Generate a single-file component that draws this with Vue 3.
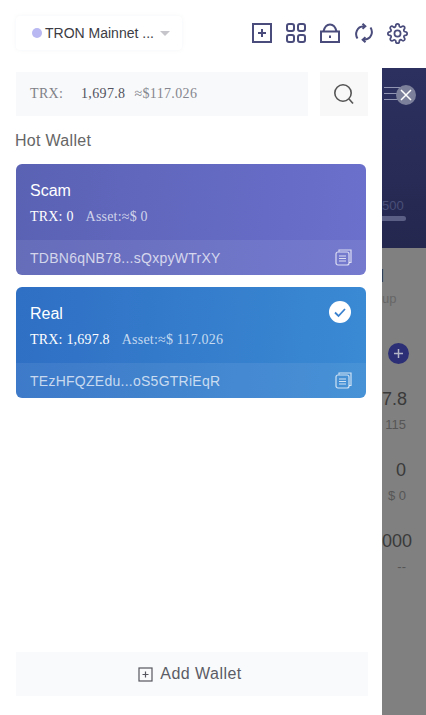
<script setup>
const wallets = [
  {
    name: "Scam",
    trx: "0",
    asset: "0",
    address: "TDBN6qNB78...sQxpyWTrXY",
    kind: "scam",
    active: false,
  },
  {
    name: "Real",
    trx: "1,697.8",
    asset: "117.026",
    address: "TEzHFQZEdu...oS5GTRiEqR",
    kind: "real",
    active: true,
  },
];

const sideRows = [
  { main: "7.8", sub: "115" },
  { main: "0", sub: "$ 0" },
  { main: "000", sub: "--" },
];
</script>

<template>
  <div class="page">
    <aside class="drawer">
      <header class="top">
        <div class="network">
          <span class="network__dot"></span>
          <span class="network__name">TRON Mainnet ...</span>
          <span class="network__caret"></span>
        </div>
        <div class="tools">
          <svg class="tool" viewBox="0 0 20 20" fill="none">
            <rect x="1" y="1" width="18" height="18" />
            <path d="M10 6v8M6 10h8" />
          </svg>
          <svg class="tool" viewBox="0 0 20 20" fill="none">
            <rect x="1" y="1" width="7" height="7" rx="2" />
            <rect x="12" y="1" width="7" height="7" rx="2" />
            <rect x="1" y="12" width="7" height="7" rx="2" />
            <rect x="12" y="12" width="7" height="7" rx="2" />
          </svg>
          <svg class="tool" viewBox="0 0 20 20" fill="none">
            <rect x="1" y="8.5" width="18" height="10.5" />
            <path d="M3.5 8.5C4.5 4 7 1.500 10 1.500s5.500 2.500 6.500 7M10 12.500v2.500" />
          </svg>
          <svg class="tool" viewBox="0 0 20 20" fill="none">
            <path d="M3.500 15.500C.500 11 2.500 3.500 10 3.300M16.500 4.500c3 4.500 1 12-6.500 12.200" />
            <path d="M8.500 .8l2.800 2.500-2.800 2.500M11.500 14.200l-2.800 2.500 2.800 2.500" />
          </svg>
          <svg class="tool tool--gear" viewBox="0 0 24 24" fill="none">
            <circle cx="12" cy="12" r="3.500" />
            <path d="M19.400 15a1.650 1.650 0 0 0 .33 1.820l.06.06a2 2 0 0 1 0 2.830 2 2 0 0 1-2.830 0l-.06-.06a1.650 1.650 0 0 0-1.820-.33 1.650 1.650 0 0 0-1 1.510V21a2 2 0 0 1-2 2 2 2 0 0 1-2-2v-.09A1.650 1.650 0 0 0 9 19.400a1.650 1.650 0 0 0-1.820.33l-.06.06a2 2 0 0 1-2.830 0 2 2 0 0 1 0-2.830l.06-.06a1.650 1.650 0 0 0 .33-1.820 1.650 1.650 0 0 0-1.510-1H3a2 2 0 0 1-2-2 2 2 0 0 1 2-2h.09A1.650 1.650 0 0 0 4.600 9a1.650 1.650 0 0 0-.33-1.820l-.06-.06a2 2 0 0 1 0-2.830 2 2 0 0 1 2.830 0l.06.06a1.650 1.650 0 0 0 1.820.33H9a1.650 1.650 0 0 0 1-1.510V3a2 2 0 0 1 2-2 2 2 0 0 1 2 2v.09a1.650 1.650 0 0 0 1 1.510 1.650 1.650 0 0 0 1.820-.33l.06-.06a2 2 0 0 1 2.830 0 2 2 0 0 1 0 2.830l-.06.06a1.650 1.650 0 0 0-.33 1.820V9a1.650 1.650 0 0 0 1.510 1H21a2 2 0 0 1 2 2 2 2 0 0 1-2 2h-.09a1.650 1.650 0 0 0-1.510 1z" />
          </svg>
        </div>
      </header>

      <div class="balance-row">
        <div class="balance">
          <span class="balance__label">TRX:</span>
          <span class="balance__value">1,697.8</span>
          <span class="balance__fiat">≈$117.026</span>
        </div>
        <button type="button" class="search" aria-label="Search">
          <svg viewBox="0 0 22 22" fill="none">
            <circle cx="10" cy="10" r="8.200" />
            <path d="M16 16l4 4.500" />
          </svg>
        </button>
      </div>

      <h2 class="section">Hot Wallet</h2>

      <div class="wallets">
        <article v-for="w in wallets" :key="w.name" class="wallet" :class="`wallet--${w.kind}`">
          <div class="wallet__body">
            <h3 class="wallet__name">{{ w.name }}</h3>
            <p class="wallet__meta">
              <span class="wallet__trx">TRX: {{ w.trx }}</span>
              <span class="wallet__asset">Asset:≈$ {{ w.asset }}</span>
            </p>
            <svg v-if="w.active" class="wallet__check" viewBox="0 0 22 22">
              <circle cx="11" cy="11" r="11" fill="#fff" />
              <path d="M6 11.500l3.500 3.500L16 8" fill="none" stroke="#3a82cf" stroke-width="1.800" />
            </svg>
          </div>
          <div class="wallet__foot">
            <span class="wallet__addr">{{ w.address }}</span>
            <svg class="wallet__copy" viewBox="0 0 17 17" fill="none">
              <path d="M4 2.500V1h12v12.500h-2" />
              <rect x="1" y="3" width="13" height="13" rx="2" />
              <path d="M4 7h7M4 9.500h7M4 12h7" />
            </svg>
          </div>
        </article>
      </div>

      <button type="button" class="add">
        <svg viewBox="0 0 15 15" fill="none">
          <rect x="1" y="1" width="13" height="13" />
          <path d="M7.500 4.500v6M4.500 7.500h6" />
        </svg>
        <span>Add Wallet</span>
      </button>
    </aside>

    <div class="side">
      <div class="side__blank"></div>
      <div class="side__hero">
        <div class="side__menu"><i></i><i></i><i></i></div>
        <span class="side__num">500</span>
        <span class="side__bar"></span>
      </div>
      <div class="side__dim">
        <div class="side__title">l</div>
        <div class="side__up">up</div>
        <div class="side__plus">
          <svg viewBox="0 0 21 21">
            <circle cx="10.500" cy="10.500" r="10.500" fill="#2c2f75" />
            <path d="M10.500 6v9M6 10.500h9" stroke="#b5b5c8" stroke-width="1.500" />
          </svg>
        </div>
        <div v-for="r in sideRows" :key="r.main" class="side__row">
          <div class="side__main">{{ r.main }}</div>
          <div class="side__sub">{{ r.sub }}</div>
        </div>
      </div>
      <button type="button" class="close" aria-label="Close">
        <svg viewBox="0 0 20 20">
          <circle cx="10" cy="10" r="10" fill="#7d809b" />
          <path d="M5 5l10 10M15 5L5 15" stroke="#fff" stroke-width="1.500" />
        </svg>
      </button>
    </div>
  </div>
</template>

<style>
html,
body {
  margin: 0;
  background: #fff;
}
</style>

<style scoped>
.page {
  position: relative;
  display: flex;
  width: 426px;
  height: 715px;
  overflow: hidden;
  font-family: "Liberation Sans", Arial, sans-serif;
}

.drawer {
  position: relative;
  z-index: 1;
  display: flex;
  flex-direction: column;
  box-sizing: border-box;
  width: 382px;
  height: 715px;
  padding: 0 14px 19px 16px;
  background: #fff;
}

.top {
  display: flex;
  align-items: center;
  justify-content: space-between;
  height: 68px;
  margin-bottom: 4px;
}

.network {
  display: flex;
  align-items: center;
  box-sizing: border-box;
  width: 166px;
  height: 34px;
  margin-top: -2px;
  padding-left: 16px;
  background: #fff;
  border-radius: 4px;
  box-shadow: 0 0 4px rgba(120, 130, 170, 0.08);
}

.network__dot {
  width: 10px;
  height: 10px;
  margin-right: 3px;
  border-radius: 50%;
  background: #b9b8f2;
}

.network__name {
  font-size: 14px;
  color: #3c3c44;
  white-space: nowrap;
}

.network__caret {
  width: 0;
  height: 0;
  margin: 1px 0 0 6px;
  border-left: 5px solid transparent;
  border-right: 5px solid transparent;
  border-top: 5px solid #c5c5cb;
}

.tools {
  display: flex;
  align-items: center;
  gap: 14px;
  margin-right: -40px;
  margin-top: -2px;
}

.tool {
  width: 20px;
  height: 20px;
  stroke: #4a4c7c;
  stroke-width: 2;
}

.tool--gear {
  width: 21px;
  height: 21px;
  margin-left: -1px;
}

.balance-row {
  display: flex;
  gap: 12px;
  height: 44px;
}

.balance {
  display: flex;
  align-items: center;
  width: 292px;
  box-sizing: border-box;
  padding-left: 14px;
  background: #f8f9fa;
  font-family: "Liberation Serif", "Times New Roman", serif;
  font-size: 14px;
  letter-spacing: 0.35px;
  color: #53535f;
}

.balance__label {
  width: 51px;
  color: #7f8088;
}

.balance__fiat {
  margin-left: 9px;
  color: #85868f;
}

.search {
  width: 48px;
  padding: 0;
  border: 0;
  background: #f8f8f8;
}

.search svg {
  display: block;
  width: 22px;
  height: 22px;
  margin: 0 auto;
  stroke: #555;
  stroke-width: 1.600;
}

.section {
  margin: 15px 0 14px -1px;
  font-size: 16px;
  font-weight: 400;
  line-height: 19px;
  letter-spacing: 0.3px;
  color: #666;
}

.wallets {
  display: flex;
  flex-direction: column;
  gap: 12px;
  flex: 1;
}

.wallet {
  position: relative;
  width: 350px;
  border-radius: 6px;
  overflow: hidden;
  color: #fff;
}

.wallet--scam {
  background: linear-gradient(95deg, #5a62b4, #6b70cc);
}

.wallet--real {
  background: linear-gradient(95deg, #2f6fc4, #3a8ad4);
}

.wallet__body {
  position: relative;
  box-sizing: border-box;
  height: 76px;
  padding: 17px 14px 0;
}

.wallet__name {
  margin: 0;
  font-size: 16px;
  font-weight: 400;
  line-height: 19px;
}

.wallet__meta {
  margin: 8px 0 0;
  font-family: "Liberation Serif", "Times New Roman", serif;
  font-size: 14px;
  line-height: 17px;
  letter-spacing: 0.2px;
  white-space: nowrap;
}

.wallet__trx {
  margin-right: 12px;
}

.wallet__asset {
  color: rgba(255, 255, 255, 0.72);
}

.wallet__check {
  position: absolute;
  top: 14px;
  right: 15px;
  width: 22px;
  height: 22px;
}

.wallet__foot {
  display: flex;
  align-items: center;
  justify-content: space-between;
  height: 35px;
  padding: 0 14px;
  background: rgba(255, 255, 255, 0.07);
}

.wallet__addr {
  font-size: 14px;
  letter-spacing: 0.26px;
  color: rgba(255, 255, 255, 0.72);
}

.wallet__copy {
  width: 17px;
  height: 17px;
  stroke: rgba(255, 255, 255, 0.75);
  stroke-width: 1.200;
}

.add {
  display: flex;
  align-items: center;
  justify-content: center;
  gap: 7px;
  height: 44px;
  padding: 0 4px 0 0;
  border: 0;
  background: #f9fafb;
  font-family: inherit;
  font-size: 16px;
  letter-spacing: 0.45px;
  color: #5c5c66;
}

.add svg {
  width: 15px;
  height: 15px;
  stroke: #55555f;
  stroke-width: 1.200;
}

.side {
  position: relative;
  display: flex;
  flex-direction: column;
  width: 44px;
  height: 715px;
  overflow: hidden;
}

.side__blank {
  height: 68px;
  background: #fff;
}

.side__hero {
  position: relative;
  height: 180px;
  background: linear-gradient(180deg, #2c305f, #24284f);
}

.side__menu {
  display: flex;
  flex-direction: column;
  gap: 5px;
  padding: 19px 0 0 2px;
}

.side__menu i {
  display: block;
  width: 18px;
  height: 1px;
  background: rgba(200, 205, 225, 0.65);
}

.side__num {
  position: absolute;
  top: 130px;
  left: 0;
  font-size: 13px;
  color: #4a4f78;
}

.side__bar {
  position: absolute;
  top: 148px;
  left: 0;
  width: 24px;
  height: 5px;
  border-radius: 0 3px 3px 0;
  background: #5c5f85;
}

.side__dim {
  position: relative;
  flex: 1;
  padding: 141px 20px 0 0;
  background: #808080;
  text-align: right;
}

.side__title {
  position: absolute;
  left: -2px;
  top: 18px;
  font-size: 18px;
  color: #333;
}

.side__up {
  position: absolute;
  left: 0;
  top: 43px;
  font-size: 13px;
  color: #666;
}

.side__plus {
  position: absolute;
  left: 6px;
  top: 95px;
  width: 21px;
  height: 21px;
}

.side__plus svg {
  display: block;
  width: 21px;
  height: 21px;
}

.side__row {
  margin-bottom: 28px;
}

.side__main {
  font-size: 18px;
  line-height: 20px;
  color: #3a3a3a;
  white-space: nowrap;
}

.side__sub {
  margin-top: 8px;
  font-size: 13px;
  line-height: 15px;
  color: #565656;
}

.close {
  position: absolute;
  top: 85px;
  left: 14px;
  width: 20px;
  height: 20px;
  padding: 0;
  border: 0;
  background: none;
}

.close svg {
  display: block;
  width: 20px;
  height: 20px;
}
</style>
